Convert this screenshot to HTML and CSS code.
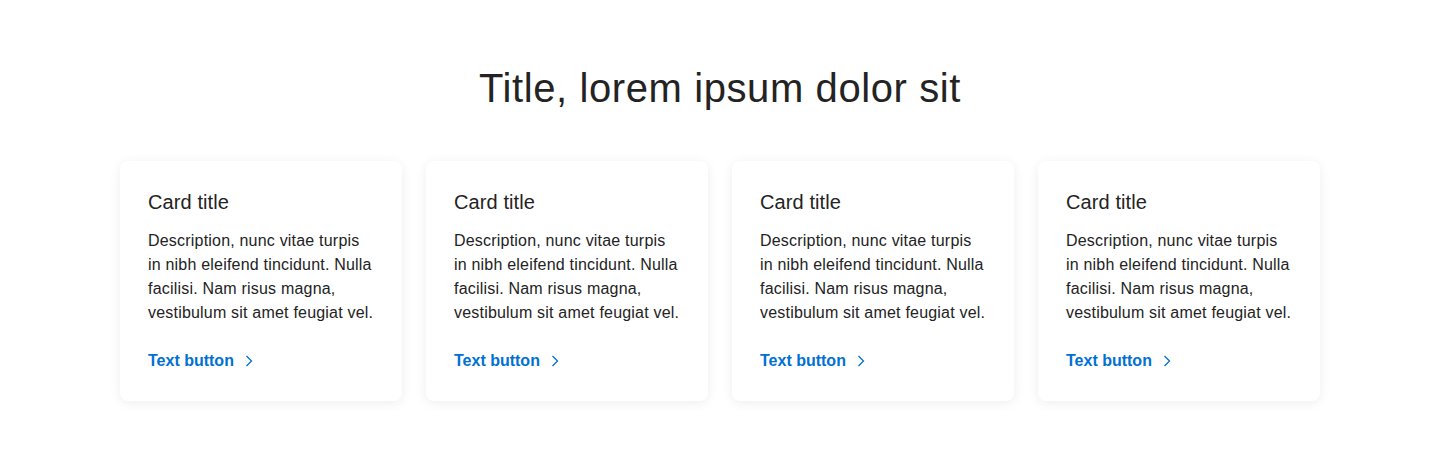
FILE: index.html
```html
<!DOCTYPE html>
<html lang="en">
<head>
<meta charset="utf-8">
<title>Cards</title>
<link rel="stylesheet" href="styles.css">
</head>
<body>
<main class="section">
  <h1 class="section-title">Title, lorem ipsum dolor sit</h1>
  <div class="cards">
    <div class="card">
      <h2 class="card-title">Card title</h2>
      <p class="card-desc">Description, nunc vitae turpis in nibh eleifend tincidunt. Nulla facilisi. Nam risus magna, vestibulum sit amet feugiat vel.</p>
      <a class="text-button" href="#">Text button <svg class="chev" width="8" height="12" viewBox="0 0 8 12"><path d="M1.5 1 L6.5 6 L1.5 11" fill="none" stroke="currentColor" stroke-width="1.3"/></svg></a>
    </div>
    <div class="card">
      <h2 class="card-title">Card title</h2>
      <p class="card-desc">Description, nunc vitae turpis in nibh eleifend tincidunt. Nulla facilisi. Nam risus magna, vestibulum sit amet feugiat vel.</p>
      <a class="text-button" href="#">Text button <svg class="chev" width="8" height="12" viewBox="0 0 8 12"><path d="M1.5 1 L6.5 6 L1.5 11" fill="none" stroke="currentColor" stroke-width="1.3"/></svg></a>
    </div>
    <div class="card">
      <h2 class="card-title">Card title</h2>
      <p class="card-desc">Description, nunc vitae turpis in nibh eleifend tincidunt. Nulla facilisi. Nam risus magna, vestibulum sit amet feugiat vel.</p>
      <a class="text-button" href="#">Text button <svg class="chev" width="8" height="12" viewBox="0 0 8 12"><path d="M1.5 1 L6.5 6 L1.5 11" fill="none" stroke="currentColor" stroke-width="1.3"/></svg></a>
    </div>
    <div class="card">
      <h2 class="card-title">Card title</h2>
      <p class="card-desc">Description, nunc vitae turpis in nibh eleifend tincidunt. Nulla facilisi. Nam risus magna, vestibulum sit amet feugiat vel.</p>
      <a class="text-button" href="#">Text button <svg class="chev" width="8" height="12" viewBox="0 0 8 12"><path d="M1.5 1 L6.5 6 L1.5 11" fill="none" stroke="currentColor" stroke-width="1.3"/></svg></a>
    </div>
  </div>
</main>
</body>
</html>
```
FILE: styles.css
```css
html, body {
  margin: 0;
  padding: 0;
  background: #ffffff;
}
body {
  font-family: "Liberation Sans", Arial, sans-serif;
  color: #232323;
}
.section {
  padding: 64px 120px 64px;
  display: flex;
  flex-direction: column;
  align-items: center;
}
.section-title {
  margin: 0;
  font-size: 40px;
  line-height: 48px;
  font-weight: 400;
  letter-spacing: 0.6px;
  color: #232323;
}
.cards {
  margin-top: 49px;
  display: grid;
  grid-template-columns: repeat(4, 282px);
  gap: 24px;
}
.card {
  background: #fff;
  border-radius: 8px;
  box-shadow: 0 2px 12px rgba(0, 0, 0, 0.07);
  padding: 27px 27px 28px 28px;
  display: flex;
  flex-direction: column;
  align-items: flex-start;
}
.card-title {
  margin: 0;
  font-size: 20px;
  line-height: 28px;
  font-weight: 400;
  letter-spacing: 0.1px;
  color: #232323;
}
.card-desc {
  margin: 13px 0 0;
  font-size: 16px;
  line-height: 24px;
  letter-spacing: 0.2px;
  color: #232323;
}
.text-button {
  margin-top: 24px;
  display: inline-flex;
  align-items: center;
  gap: 11px;
  font-size: 16px;
  line-height: 24px;
  font-weight: 700;
  color: #0070d2;
  text-decoration: none;
}
.chev {
  display: block;
}
```
